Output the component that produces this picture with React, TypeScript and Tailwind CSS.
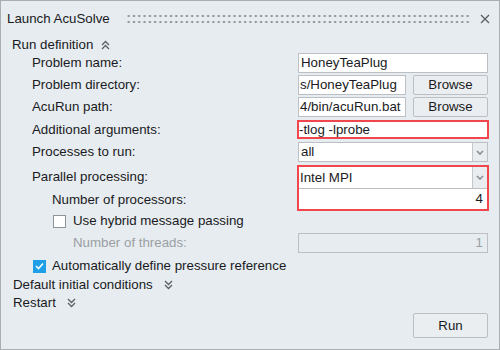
import React from "react";

const font = { fontFamily: "'Liberation Sans', Arial, sans-serif" };

function Chevrons({ up }: { up?: boolean }) {
  return (
    <svg width="9" height="10" viewBox="0 0 9 10" className="shrink-0">
      {up ? (
        <path d="M1 5 L4.5 1.5 L8 5 M1 9 L4.5 5.5 L8 9" fill="none" stroke="#5b5f63" strokeWidth="1.3" />
      ) : (
        <path d="M1 1 L4.5 4.5 L8 1 M1 5 L4.5 8.5 L8 5" fill="none" stroke="#5b5f63" strokeWidth="1.3" />
      )}
    </svg>
  );
}

function DropArrow() {
  return (
    <div className="flex h-full w-[15px] shrink-0 items-center justify-center border-l border-[#c4c8cc] bg-[#e9edf0]">
      <svg width="8" height="5" viewBox="0 0 8 5">
        <path d="M1 1 L4 4 L7 1" fill="none" stroke="#8d9296" strokeWidth="1.7" />
      </svg>
    </div>
  );
}

function Label({ children, indent = "pl-[31px]", gray }: { children: React.ReactNode; indent?: string; gray?: boolean }) {
  return (
    <div className={`flex flex-1 items-center ${indent} ${gray ? "text-[#9b9fa3]" : "text-[#1a1a22]"}`}>
      {children}
    </div>
  );
}

function BrowseRow({ text }: { text: string }) {
  return (
    <div className="flex h-full w-[190px] gap-[7px]">
      <div className="flex h-full w-[108px] items-center whitespace-nowrap border border-[#bcc0c4] bg-white pl-[1px]">
        {text}
      </div>
      <button className="flex h-full flex-1 items-center justify-center rounded-[2px] border border-[#bcc0c4] bg-[#eaeef1]">
        Browse
      </button>
    </div>
  );
}

export default function App() {
  return (
    <div
      className="flex h-[350px] w-[500px] flex-col border border-[#a9aeb3] bg-[#e6ecf0] pr-[11px] text-[13.3px] text-[#1a1a22]"
      style={font}
    >
      {/* title bar */}
      <div className="flex h-[35px] shrink-0 items-center pl-[6px]">
        <span>Launch AcuSolve</span>
        <div className="ml-[16px] mr-[10px] h-[10px] flex-1 bg-[radial-gradient(circle,#8f959a_1.1px,transparent_1.5px)] bg-[length:5.3px_6px] bg-[position:0_-1px]" />
        <svg width="10" height="10" viewBox="0 0 10 10" className="mr-[-2px]">
          <path d="M1 1 L9 9 M9 1 L1 9" stroke="#5b5f63" strokeWidth="1.3" />
        </svg>
      </div>

      <div className="flex h-[17px] shrink-0 items-center gap-[8px] pl-[11px]">
        <span>Run definition</span>
        <Chevrons up />
      </div>

      <div className="flex h-[20px] shrink-0">
        <Label>Problem name:</Label>
        <div className="flex h-full w-[190px] items-center border border-[#bcc0c4] bg-white px-[2px]">HoneyTeaPlug</div>
      </div>
      <div className="mt-[2px] flex h-[20px] shrink-0">
        <Label>Problem directory:</Label>
        <BrowseRow text="s/HoneyTeaPlug" />
      </div>
      <div className="mt-[2px] flex h-[20px] shrink-0">
        <Label>AcuRun path:</Label>
        <BrowseRow text="4/bin/acuRun.bat" />
      </div>

      <div className="mt-[3px] flex h-[19px] shrink-0">
        <Label>Additional arguments:</Label>
        <div className="-ml-px -mr-[1px] flex h-full w-[192px] items-center border-2 border-[#f1464b] bg-white">
          <span>-tlog -lprobe</span>
        </div>
      </div>

      <div className="mt-[3px] flex h-[20px] shrink-0">
        <Label>Processes to run:</Label>
        <div className="flex h-full w-[190px] border border-[#bcc0c4] bg-white">
          <div className="flex flex-1 items-center px-[2px]">all</div>
          <DropArrow />
        </div>
      </div>

      <div className="mt-[3px] flex h-[46px] shrink-0">
        <div className="flex flex-1 flex-col">
          <div className="flex h-[23px] items-center pl-[31px]">Parallel processing:</div>
          <div className="flex h-[23px] items-center pl-[51px]">Number of processors:</div>
        </div>
        <div className="-ml-px -mr-[1px] flex h-full w-[192px] flex-col border-2 border-[#f1464b] bg-white">
          <div className="flex h-[22px] border-b border-[#bcc0c4]">
            <div className="flex flex-1 items-center px-[1px]">Intel MPI</div>
            <DropArrow />
          </div>
          <div className="flex flex-1 items-center justify-end pr-[4px]">4</div>
        </div>
      </div>

      <div className="flex h-[20px] shrink-0 items-center gap-[7px] pl-[52px]">
        <div className="h-[13px] w-[13px] border border-[#8e9398] bg-white" />
        <span>Use hybrid message passing</span>
      </div>

      <div className="mt-[2px] flex h-[20px] shrink-0">
        <Label indent="pl-[72px]" gray>
          Number of threads:
        </Label>
        <div className="flex h-full w-[190px] items-center justify-end border border-[#bcc0c4] pr-[4px] text-[#9b9fa3]">
          1
        </div>
      </div>

      <div className="mt-[3px] flex h-[20px] shrink-0 items-center gap-[6px] pl-[32px]">
        <div className="flex h-[13px] w-[13px] items-center justify-center bg-[#1e9fe8]">
          <svg width="9" height="8" viewBox="0 0 9 8">
            <path d="M1 4 L3.5 6.5 L8 1.5" fill="none" stroke="#ffffff" strokeWidth="1.6" />
          </svg>
        </div>
        <span>Automatically define pressure reference</span>
      </div>

      <div className="flex h-[18px] shrink-0 items-center gap-[11px] pl-[12px]">
        <span>Default initial conditions</span>
        <Chevrons />
      </div>
      <div className="flex h-[18px] shrink-0 items-center gap-[11px] pl-[12px]">
        <span>Restart</span>
        <Chevrons />
      </div>

      <div className="mt-[1px] flex h-[25px] shrink-0 justify-end">
        <button className="flex h-full w-[75px] items-center justify-center rounded-[2px] border border-[#bcc0c4] bg-[#eaeef1]">
          Run
        </button>
      </div>
    </div>
  );
}
